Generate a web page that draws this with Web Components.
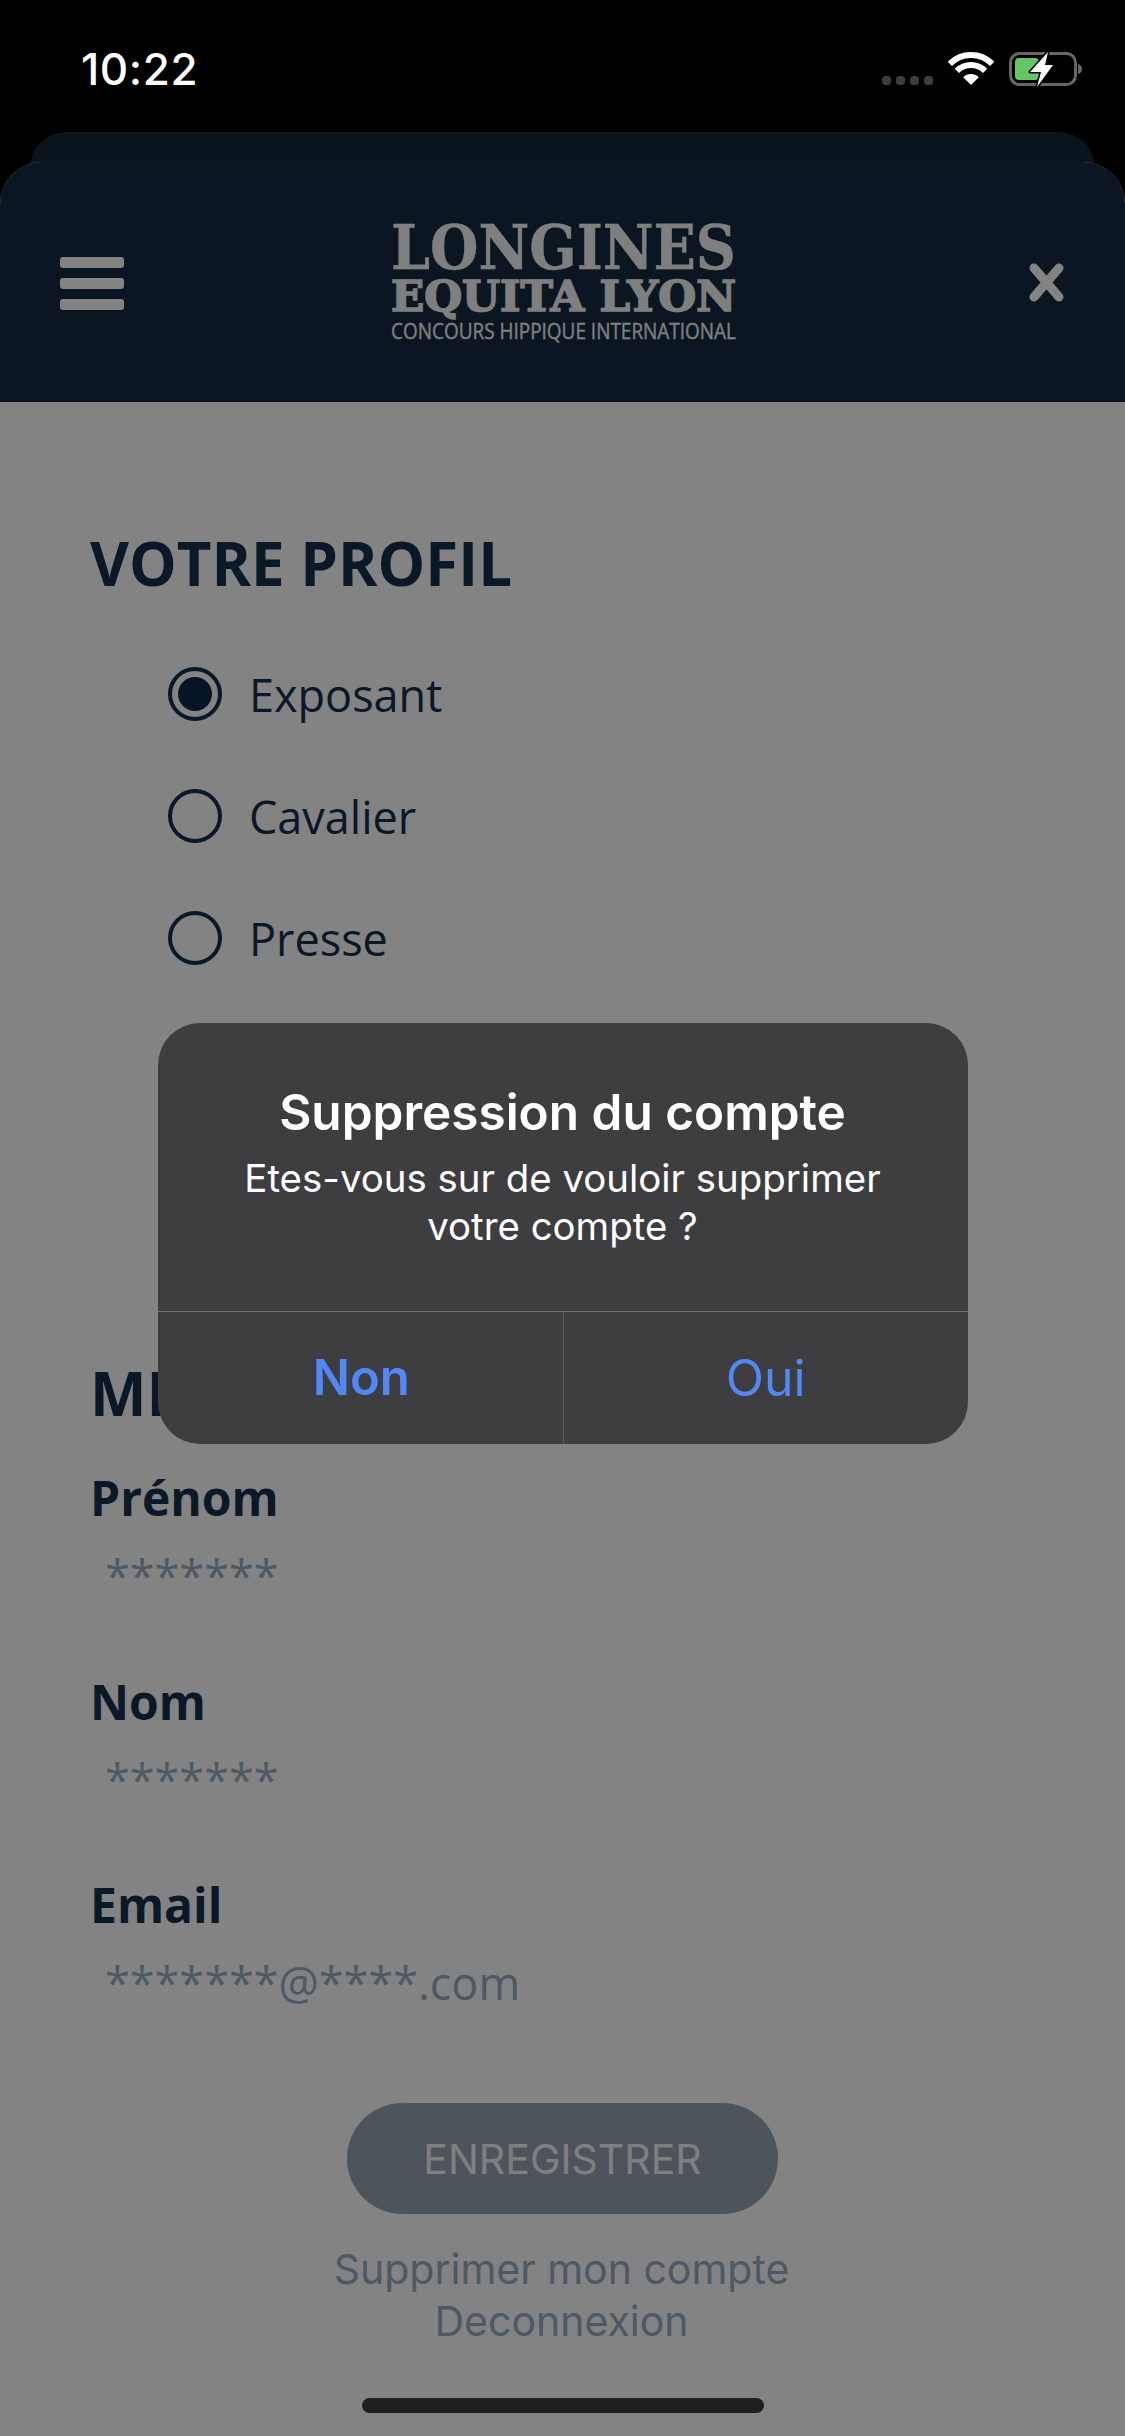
<!DOCTYPE html>
<html lang="fr">
<head>
<meta charset="utf-8">
<title>Votre profil</title>
<style>
  html, body { margin: 0; padding: 0; background: #000; }
  body { width: 1125px; height: 2436px; overflow: hidden; position: relative; font-family: "Open Sans", sans-serif; }
</style>
</head>
<body>
<status-bar time="10:22"></status-bar>
<app-sheet>
  <section-title>VOTRE PROFIL</section-title>
  <profile-radio label="Exposant" checked></profile-radio>
  <profile-radio label="Cavalier"></profile-radio>
  <profile-radio label="Presse"></profile-radio>
  <section-title style="margin-top:354px">MES INFORMATIONS</section-title>
  <profile-field label="Prénom" value="*******" style="margin-top:34px"></profile-field>
  <profile-field label="Nom" value="*******" style="margin-top:65px"></profile-field>
  <profile-field label="Email" value="*******@****.com" style="margin-top:64px"></profile-field>
  <save-button style="margin-top:90px">ENREGISTRER</save-button>
  <account-links></account-links>
  <home-bar></home-bar>
</app-sheet>
<alert-overlay>
  <alert-box titre="Suppression du compte" non="Non" oui="Oui">Etes-vous sur de vouloir supprimer<br>votre compte ?</alert-box>
</alert-overlay>

<script>
class StatusBar extends HTMLElement {
  constructor() {
    super();
    this.attachShadow({ mode: 'open' });
  }

  connectedCallback() {
    const time = this.getAttribute('time') || '';
    this.shadowRoot.innerHTML = `
      <style>
        :host {
          display: flex;
          position: relative;
          z-index: 2;
          height: 132px;
          box-sizing: border-box;
          padding: 51px 43px 0 81px;
          justify-content: space-between;
          align-items: flex-start;
          background: #000;
        }
        .time {
          font: 500 44px/36px Inter, sans-serif;
          color: #fff;
          letter-spacing: 0.6px;
          width: 130px;
        }
        .icons { display: flex; gap: 15px; padding-top: 1px; }
        svg { display: block; }
      </style>
      <div class="time">${time}</div>
      <div class="icons">
        <svg width="51" height="34" viewBox="0 0 51 34" fill="#3d3d3d">
          <rect x="0" y="24" width="9" height="9" rx="3.5"/>
          <rect x="14" y="24" width="9" height="9" rx="3.5"/>
          <rect x="28" y="24" width="9" height="9" rx="3.5"/>
          <rect x="42" y="24" width="9" height="9" rx="3.5"/>
        </svg>
        <svg width="46" height="34" viewBox="0 0 46 34" fill="none" stroke="#fff" stroke-width="6">
          <path d="M1.8 11.8A30 30 0 0 1 44.2 11.8"/>
          <path d="M8.9 18.9A20 20 0 0 1 37.1 18.9"/>
          <path d="M23 33L15.2 25.2A11 11 0 0 1 30.8 25.2Z" fill="#fff" stroke="none"/>
        </svg>
        <svg width="73" height="36" viewBox="0 0 73 36">
          <rect x="1.500" y="1.500" width="65" height="31" rx="9" fill="none" stroke="#666" stroke-width="3"/>
          <path d="M69 12c2 .5 4 2 4 5s-2 4.500-4 5z" fill="#666"/>
          <rect x="6" y="6" width="24" height="22" rx="4" fill="#65c466"/>
          <path d="M39 0L21 20H32L28 35L44 13H36Z" fill="#fff" stroke="#000" stroke-width="3" paint-order="stroke" stroke-linejoin="round"/>
        </svg>
      </div>
    `;
  }
}

class AppSheet extends HTMLElement {
  constructor() {
    super();
    this.attachShadow({ mode: 'open' });
    this.shadowRoot.innerHTML = `
      <style>
        :host { display: block; }
        .back {
          height: 60px;
          margin: 0 30px -30px;
          background: #13273a;
          border-radius: 36px 36px 0 0;
        }
        .front {
          position: relative;
          background: #fff;
          border-radius: 42px 42px 0 0;
          overflow: hidden;
        }
        .content {
          display: flex;
          flex-direction: column;
          padding: 121px 0 0 90px;
          height: 2034px;
          box-sizing: border-box;
        }
      </style>
      <div class="back"></div>
      <div class="front">
        <app-header></app-header>
        <div class="content"><slot></slot></div>
      </div>
    `;
  }
}

class AppHeader extends HTMLElement {
  constructor() {
    super();
    this.attachShadow({ mode: 'open' });
    this.shadowRoot.innerHTML = `
      <style>
        :host {
          display: flex;
          height: 240px;
          box-sizing: border-box;
          padding: 0 61px 0 60px;
          background: #172c42;
          align-items: center;
          justify-content: space-between;
        }
        .burger { display: flex; flex-direction: column; gap: 10px; margin-top: 2px; }
        .burger span { display: block; width: 64px; height: 11px; background: #fff; border-radius: 3px; }
        svg { display: block; }
        .logo { margin: 2px 27px 0 0; overflow: visible; }
        .logo text { fill: #f8f8f8; stroke: #f8f8f8; }
        .l1 { font: 700 62px "DejaVu Serif", serif; stroke-width: .4px; }
        .l2 { font: 700 42px "DejaVu Serif", serif; stroke-width: 1.6px; }
        .l3 { font: 400 21px "Open Sans", sans-serif; stroke-width: .3px; }
      </style>
      <div class="burger"><span></span><span></span><span></span></div>
      <svg class="logo" width="345" height="122" viewBox="0 0 345 122">
        <text class="l1" x="0" y="47" textLength="345" lengthAdjust="spacingAndGlyphs">LONGINES</text>
        <text class="l2" x="0" y="89" textLength="345" lengthAdjust="spacingAndGlyphs">EQUITA LYON</text>
        <text class="l3" x="0" y="117" textLength="345" lengthAdjust="spacingAndGlyphs">CONCOURS HIPPIQUE INTERNATIONAL</text>
      </svg>
      <svg width="35" height="39" viewBox="0 0 35 39" stroke="#fff" stroke-width="9" stroke-linecap="round">
        <path d="M5 5L30 34M30 5L5 34"/>
      </svg>
    `;
  }
}

class SectionTitle extends HTMLElement {
  constructor() {
    super();
    this.attachShadow({ mode: 'open' });
    this.shadowRoot.innerHTML = `
      <style>
        :host {
          display: block;
          font: 700 60px/80px "Open Sans", sans-serif;
          color: #142f4e;
          white-space: nowrap;
        }
      </style>
      <slot></slot>
    `;
  }
}

class ProfileRadio extends HTMLElement {
  constructor() {
    super();
    this.attachShadow({ mode: 'open' });
  }

  static get observedAttributes() {
    return ['label', 'checked'];
  }

  connectedCallback() {
    this.render();
  }

  attributeChangedCallback() {
    this.render();
  }

  render() {
    const label = this.getAttribute('label') || '';
    const checked = this.hasAttribute('checked');
    this.shadowRoot.innerHTML = `
      <style>
        :host {
          display: flex;
          height: 122px;
          align-items: center;
          padding-left: 78px;
          gap: 27px;
          font: 400 45px/60px "Open Sans", sans-serif;
          color: #142f4e;
        }
        :host(:first-of-type) { margin-top: 30px; }
        .circle {
          width: 54px;
          height: 54px;
          box-sizing: border-box;
          border: 4px solid #142f4e;
          border-radius: 50%;
          display: flex;
          align-items: center;
          justify-content: center;
        }
        .dot { width: 34px; height: 34px; border-radius: 50%; background: #0a2a48; }
        .text { padding-top: 2px; }
      </style>
      <span class="circle">${checked ? '<span class="dot"></span>' : ''}</span>
      <span class="text">${label}</span>
    `;
  }
}

class ProfileField extends HTMLElement {
  constructor() {
    super();
    this.attachShadow({ mode: 'open' });
  }

  connectedCallback() {
    const label = this.getAttribute('label') || '';
    const value = this.getAttribute('value') || '';
    this.shadowRoot.innerHTML = `
      <style>
        :host { display: block; }
        .label { font: 700 48px/62px "Open Sans", sans-serif; color: #142f4e; }
        .value {
          margin-top: 17px;
          padding-left: 15px;
          font: 400 45px/60px "Open Sans", sans-serif;
          color: #99aec2;
        }
      </style>
      <div class="label">${label}</div>
      <div class="value">${value}</div>
    `;
  }
}

class SaveButton extends HTMLElement {
  constructor() {
    super();
    this.attachShadow({ mode: 'open' });
    this.shadowRoot.innerHTML = `
      <style>
        :host {
          display: flex;
          width: 431px;
          height: 111px;
          margin-left: 257px;
          border-radius: 56px;
          background: #96a3b1;
          color: #f7f7f7;
          align-items: center;
          justify-content: center;
          font: 400 41px/50px Inter, sans-serif;
        }
      </style>
      <slot></slot>
    `;
  }
}

class AccountLinks extends HTMLElement {
  constructor() {
    super();
    this.attachShadow({ mode: 'open' });
    this.shadowRoot.innerHTML = `
      <style>
        :host {
          display: block;
          width: 943px;
          margin-top: 29px;
          text-align: center;
          font: 400 41px/52px Inter, sans-serif;
          color: #99aec2;
        }
      </style>
      <div>Supprimer mon compte</div>
      <div>Deconnexion</div>
    `;
  }
}

class HomeBar extends HTMLElement {
  constructor() {
    super();
    this.attachShadow({ mode: 'open' });
    this.shadowRoot.innerHTML = `
      <style>
        :host {
          display: block;
          width: 402px;
          height: 15px;
          margin: 51px 0 0 272px;
          background: #3e3e3e;
          border-radius: 8px;
        }
      </style>
    `;
  }
}

class AlertOverlay extends HTMLElement {
  constructor() {
    super();
    this.attachShadow({ mode: 'open' });
    this.shadowRoot.innerHTML = `
      <style>
        :host {
          position: absolute;
          inset: 0;
          z-index: 1;
          display: flex;
          justify-content: center;
          align-items: flex-start;
          padding-top: 1023px;
          box-sizing: border-box;
          background: rgba(0, 0, 0, 0.485);
        }
      </style>
      <slot></slot>
    `;
  }
}

class AlertBox extends HTMLElement {
  constructor() {
    super();
    this.attachShadow({ mode: 'open' });
  }

  connectedCallback() {
    const titre = this.getAttribute('titre') || '';
    const non = this.getAttribute('non') || '';
    const oui = this.getAttribute('oui') || '';
    this.shadowRoot.innerHTML = `
      <style>
        :host {
          display: block;
          width: 810px;
          height: 421px;
          background: #3e3e40;
          border-radius: 42px;
          overflow: hidden;
          color: #fff;
          font-family: Inter, sans-serif;
        }
        .message {
          height: 289px;
          box-sizing: border-box;
          padding-top: 58px;
          text-align: center;
          border-bottom: 1px solid #6e6e6e;
        }
        h2 { margin: 0 0 11px; font: 600 49.500px/62px Inter, sans-serif; }
        p { margin: 0; font: 400 38.400px/48px Inter, sans-serif; }
        .actions { display: flex; height: 132px; }
        .actions div {
          flex: 1;
          display: flex;
          align-items: center;
          justify-content: center;
          font: 400 50px/60px Inter, sans-serif;
          color: #5288f5;
        }
        .actions .non { font-size: 49px; font-weight: 600; padding-left: 2px; border-right: 1px solid #5c5c5c; }
      </style>
      <div class="message">
        <h2>${titre}</h2>
        <p><slot></slot></p>
      </div>
      <div class="actions">
        <div class="non">${non}</div>
        <div>${oui}</div>
      </div>
    `;
  }
}

customElements.define('status-bar', StatusBar);
customElements.define('app-sheet', AppSheet);
customElements.define('app-header', AppHeader);
customElements.define('section-title', SectionTitle);
customElements.define('profile-radio', ProfileRadio);
customElements.define('profile-field', ProfileField);
customElements.define('save-button', SaveButton);
customElements.define('account-links', AccountLinks);
customElements.define('home-bar', HomeBar);
customElements.define('alert-overlay', AlertOverlay);
customElements.define('alert-box', AlertBox);
</script>
</body>
</html>
